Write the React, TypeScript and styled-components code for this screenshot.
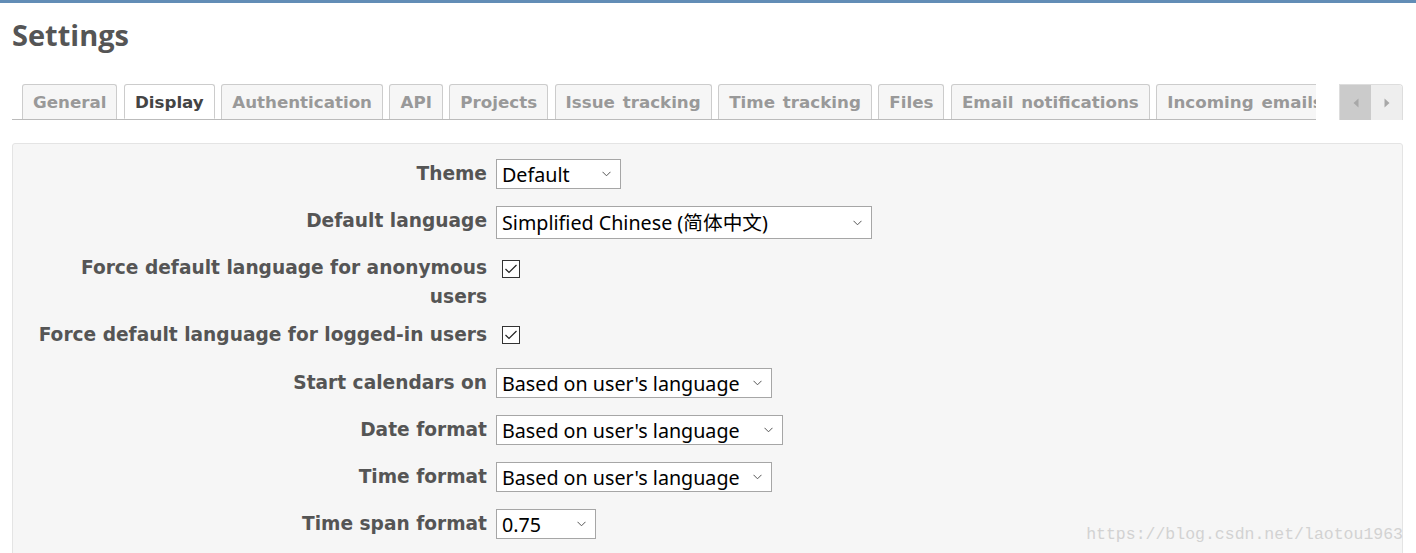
import React from "react";
import styled, { createGlobalStyle } from "styled-components";

const GlobalStyle = createGlobalStyle`
  html, body {
    margin: 0;
    padding: 0;
    background: #fff;
  }
  body {
    font-family: "DejaVu Sans", Verdana, sans-serif;
    color: #333;
  }
`;

const Page = styled.div`
  position: relative;
  height: 553px;
  overflow: hidden;
`;

const TopBar = styled.div`
  height: 3px;
  background: #628db6;
`;

const Content = styled.div`
  padding: 0 13px 0 12px;
`;

const Title = styled.h2`
  margin: 14px 0 0 0;
  font-family: "Open Sans", Lato, sans-serif;
  font-weight: 700;
  font-size: 29px;
  line-height: 35px;
  color: #555;
`;

const TabBar = styled.div`
  display: flex;
  align-items: flex-end;
  margin-top: 32px;
  height: 36px;
`;

const TabViewport = styled.div`
  flex: 1;
  min-width: 0;
  overflow: hidden;
  margin-right: 23px;
`;

const TabList = styled.ul`
  display: flex;
  gap: 6.5px;
  margin: 0;
  padding: 0 0 0 10px;
  list-style: none;
  white-space: nowrap;
  height: 35px;
  border-bottom: 1px solid #bbb;
`;

const Tab = styled.li<{ $active?: boolean }>`
  flex: none;
  height: 35px;
  box-sizing: border-box;
  padding: 0 10px;
  border: 1px solid #ccc;
  border-bottom: ${(p) => (p.$active ? "1px solid #fff" : "none")};
  border-radius: 3px 3px 0 0;
  background: ${(p) => (p.$active ? "#fff" : "#f6f6f6")};
  color: ${(p) => (p.$active ? "#444" : "#999")};
  font-weight: bold;
  font-size: 16.7px;
  line-height: 34px;
  word-spacing: 2px;
  cursor: pointer;
`;

const ScrollButtons = styled.div`
  display: flex;
  flex: none;
  height: 36px;
  border: 1px solid #ddd;
  border-bottom: none;
  border-radius: 0 4px 0 0;
  box-sizing: border-box;
  overflow: hidden;
`;

const ScrollButton = styled.button<{ $pressed?: boolean }>`
  width: 31px;
  height: 100%;
  border: none;
  padding: 0;
  display: flex;
  align-items: center;
  justify-content: center;
  background: ${(p) => (p.$pressed ? "#cbcbcb" : "#eee")};
  cursor: pointer;
`;

const Panel = styled.div`
  margin-top: 23px;
  background: #f6f6f6;
  border: 1px solid #e4e4e4;
  border-radius: 3px;
  padding: 15px 0 40px 14px;
`;

const Row = styled.div<{ $mb?: number }>`
  display: flex;
  align-items: flex-start;
  min-height: 30px;
  margin-bottom: ${(p) => p.$mb ?? 17}px;
`;

const Label = styled.label`
  flex: none;
  width: 460px;
  margin-right: 9px;
  text-align: right;
  font-weight: bold;
  font-size: 18.6px;
  line-height: 29px;
  color: #555;
`;

const SelectWrap = styled.div<{ $w: number; $h?: number }>`
  position: relative;
  width: ${(p) => p.$w}px;
  height: ${(p) => p.$h ?? 30}px;
`;

const Select = styled.select`
  appearance: none;
  -webkit-appearance: none;
  width: 100%;
  height: 100%;
  box-sizing: border-box;
  margin: 0;
  padding: 0 24px 0 5px;
  border: 1px solid #a6a6a6;
  border-radius: 0;
  background: #fff;
  color: #000;
  font-family: "Noto Sans", "Noto Sans CJK SC", sans-serif;
  font-size: 19.7px;
  outline: none;
`;

const Chevron = styled.svg`
  position: absolute;
  right: 10px;
  top: 50%;
  margin-top: -3px;
  pointer-events: none;
`;

const CheckBox = styled.span<{ $top: number }>`
  display: inline-flex;
  align-items: center;
  justify-content: center;
  width: 18px;
  height: 18px;
  box-sizing: border-box;
  margin: ${(p) => p.$top}px 0 0 6px;
  border: 1px solid #333;
  background: #fff;
`;

const Watermark = styled.div`
  position: absolute;
  right: 13px;
  bottom: 9px;
  font-family: "Liberation Mono", monospace;
  font-size: 16.5px;
  color: #d2d2d2;
  pointer-events: none;
`;

const tabs = [
  "General",
  "Display",
  "Authentication",
  "API",
  "Projects",
  "Issue tracking",
  "Time tracking",
  "Files",
  "Email notifications",
  "Incoming emails",
];

const Dropdown: React.FC<{ value: string; w: number; h?: number }> = ({ value, w, h }) => (
  <SelectWrap $w={w} $h={h}>
    <Select defaultValue={value}>
      <option>{value}</option>
    </Select>
    <Chevron width="9" height="6" viewBox="0 0 9 6">
      <polyline points="0.5,0.8 4.5,4.8 8.5,0.8" fill="none" stroke="#555" strokeWidth="1" />
    </Chevron>
  </SelectWrap>
);

const Check: React.FC<{ top: number }> = ({ top }) => (
  <CheckBox $top={top}>
    <svg width="14" height="12" viewBox="0 0 14 12">
      <polyline points="1.5,6 5,9.5 12.5,2" fill="none" stroke="#222" strokeWidth="1.2" />
    </svg>
  </CheckBox>
);

const App: React.FC = () => (
  <Page>
    <GlobalStyle />
    <TopBar />
    <Content>
      <Title>Settings</Title>
      <TabBar>
        <TabViewport>
          <TabList>
            {tabs.map((t) => (
              <Tab key={t} $active={t === "Display"}>
                {t}
              </Tab>
            ))}
          </TabList>
        </TabViewport>
        <ScrollButtons>
          <ScrollButton $pressed aria-label="left">
            <svg width="6" height="10" viewBox="0 0 6 10">
              <polygon points="5.5,0.5 0.5,5 5.5,9.5" fill="#a8a8a8" />
            </svg>
          </ScrollButton>
          <ScrollButton aria-label="right">
            <svg width="6" height="10" viewBox="0 0 6 10">
              <polygon points="0.5,0.5 5.5,5 0.5,9.5" fill="#a8a8a8" />
            </svg>
          </ScrollButton>
        </ScrollButtons>
      </TabBar>
      <Panel>
        <Row>
          <Label>Theme</Label>
          <Dropdown value="Default" w={125} />
        </Row>
        <Row $mb={14}>
          <Label>Default language</Label>
          <Dropdown value="Simplified Chinese (简体中文)" w={376} h={33} />
        </Row>
        <Row $mb={9}>
          <Label>Force default language for anonymous users</Label>
          <Check top={7} />
        </Row>
        <Row $mb={18}>
          <Label>Force default language for logged-in users</Label>
          <Check top={6} />
        </Row>
        <Row>
          <Label>Start calendars on</Label>
          <Dropdown value="Based on user's language" w={276} />
        </Row>
        <Row>
          <Label>Date format</Label>
          <Dropdown value="Based on user's language" w={287} />
        </Row>
        <Row>
          <Label>Time format</Label>
          <Dropdown value="Based on user's language" w={276} />
        </Row>
        <Row>
          <Label>Time span format</Label>
          <Dropdown value="0.75" w={100} />
        </Row>
      </Panel>
    </Content>
    <Watermark>https://blog.csdn.net/laotou1963</Watermark>
  </Page>
);

export default App;
